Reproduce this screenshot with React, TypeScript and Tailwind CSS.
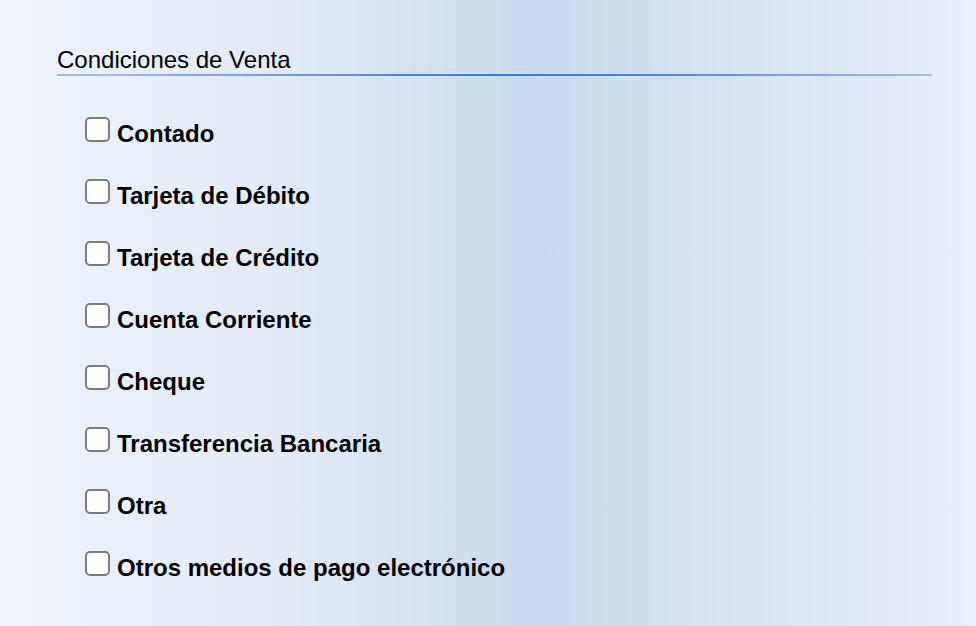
import React from "react";

const options = [
  "Contado",
  "Tarjeta de Débito",
  "Tarjeta de Crédito",
  "Cuenta Corriente",
  "Cheque",
  "Transferencia Bancaria",
  "Otra",
  "Otros medios de pago electrónico",
];

export default function App() {
  return (
    <div
      className="min-h-screen w-full bg-[linear-gradient(90deg,#eef3fb_0%,#e2eaf6_30%,#c9d9ee_55%,#dbe5f4_80%,#e9eff9_100%)] pt-[46px] pl-[57px] pr-[44px] text-black"
      style={{ fontFamily: '"Liberation Sans", Arial, Helvetica, sans-serif' }}
    >
      <div className="text-[24px] leading-[28px]">Condiciones de Venta</div>
      <div className="h-[2px] w-[875px] bg-[linear-gradient(90deg,#a6c2e9_0%,#3b78d8_50%,#4a82da_65%,#a3c0e8_100%)]" />
      <div className="mt-[41px] flex flex-col gap-[31px] pl-[28px]">
        {options.map((o) => (
          <label key={o} className="flex items-start gap-[7px]">
            <span className="block h-[25px] w-[25px] shrink-0 rounded-[5px] border-2 border-[#7d7d7d] bg-white" />
            <span className="mt-[3px] text-[24px] font-bold leading-[28px]">{o}</span>
          </label>
        ))}
      </div>
    </div>
  );
}
